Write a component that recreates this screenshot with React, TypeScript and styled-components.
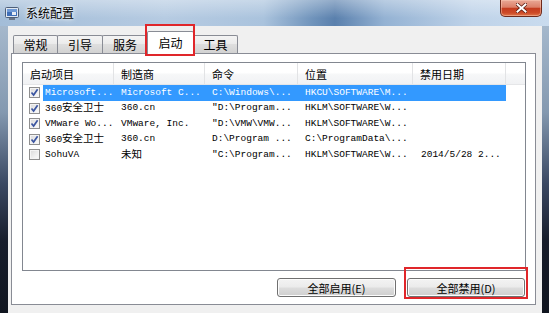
import styled, { createGlobalStyle } from "styled-components";

const Global = createGlobalStyle`
  html, body { margin: 0; padding: 0; }
  body { width: 549px; height: 313px; overflow: hidden; background: #161c29; }
`;

const Window = styled.div`
  width: 549px;
  height: 313px;
  display: flex;
  flex-direction: column;
  overflow: hidden;
`;

const TitleBar = styled.div`
  height: 26px;
  flex: none;
  display: flex;
  align-items: flex-start;
  padding-left: 5px;
  background:
    linear-gradient(180deg, rgba(255, 255, 255, 0.35), rgba(255, 255, 255, 0) 70%),
    linear-gradient(90deg, #a3bdd8 0%, #b6cbe2 30%, #aac3dd 48%, #6f93bb 57%, #5a80ad 61%, #94b2d3 70%, #bfd3e9 86%, #c9dbee 100%);
`;

const TitleIcon = styled.svg`
  margin-top: 7px;
  flex: none;
`;

const TitleText = styled.span`
  margin: 6px 0 0 7px;
  font: 12px/14px "Noto Sans CJK SC", sans-serif;
  color: #000;
  text-shadow: 0 0 6px #fff, 0 0 3px #fff;
`;

const CloseButton = styled.div`
  margin-left: auto;
  margin-right: 7px;
  width: 42px;
  height: 17px;
  box-sizing: border-box;
  display: flex;
  align-items: center;
  justify-content: center;
  border: 1px solid #6e2a1c;
  border-top: none;
  border-radius: 0 0 5px 5px;
  background: linear-gradient(180deg, #e9a896 0%, #dc8069 45%, #c43c1f 52%, #cd4a27 80%, #e0764a 100%);
  box-shadow: inset 0 0 0 1px rgba(255, 210, 190, 0.45);
`;

const Body = styled.div`
  flex: 1;
  display: flex;
  padding: 0 7px 0 8px;
  background: linear-gradient(180deg, #a5b8cc 0%, #8499b0 30%, #3a4862 55%, #171d2b 75%, #10151f 100%);
`;

const Client = styled.div`
  flex: 1;
  display: flex;
  flex-direction: column;
  padding: 0 6px 8px 3px;
  background: #f0f0f0;
`;

const TabStrip = styled.div`
  height: 27px;
  flex: none;
  display: flex;
  align-items: flex-end;
  padding-left: 2px;
  position: relative;
  z-index: 1;
`;

const Tab = styled.div<{ $w: number; $active?: boolean }>`
  position: relative;
  width: ${(p) => p.$w}px;
  height: ${(p) => (p.$active ? 23 : 18)}px;
  margin-right: -1px;
  margin-bottom: ${(p) => (p.$active ? -1 : 0)}px;
  box-sizing: border-box;
  display: flex;
  align-items: center;
  justify-content: center;
  border: 1px solid #898c95;
  border-bottom: none;
  border-radius: 2px 2px 0 0;
  background: ${(p) =>
    p.$active ? "#fff" : "linear-gradient(180deg, #f4f4f4 0%, #ebebeb 45%, #dedede 50%, #d2d2d2 100%)"};
  z-index: ${(p) => (p.$active ? 2 : 0)};
  font: 12px/14px "Noto Sans CJK SC", sans-serif;
  color: #000;

  ${(p) =>
    p.$active &&
    `
    &::after {
      content: "";
      position: absolute;
      left: -3px;
      right: -2px;
      top: -8px;
      bottom: -2px;
      border: 2px solid #e0262a;
    }
  `}
`;

const Panel = styled.div`
  flex: 1;
  display: flex;
  flex-direction: column;
  padding: 8px 9px 7px 10px;
  border: 1px solid #898c95;
  background: #fff;
`;

const ListView = styled.div`
  height: 209px;
  flex: none;
  box-sizing: border-box;
  border: 1px solid #828790;
  background: #fff;
  overflow: hidden;
`;

const HeaderRow = styled.div`
  display: grid;
  grid-template-columns: 91px 91px 93px 115px 93px 1fr;
  height: 22px;
  background: linear-gradient(180deg, #ffffff 0%, #ffffff 45%, #f6f7f8 55%, #f1f2f4 100%);
  border-bottom: 1px solid #e5e6e8;
  box-sizing: border-box;
`;

const HeaderCell = styled.div`
  display: flex;
  align-items: center;
  padding-left: 7px;
  border-right: 1px solid #e2e3e5;
  font: 11px/14px "Noto Sans CJK SC", sans-serif;
  color: #000;

  &:last-child {
    border-right: none;
  }
`;

const Row = styled.div`
  display: flex;
  height: 15.5px;
`;

const CheckCell = styled.div`
  width: 20px;
  flex: none;
  display: flex;
  align-items: center;
  padding-left: 6px;
  box-sizing: border-box;
`;

const Check = styled.div<{ $on: boolean }>`
  width: 11px;
  height: 11px;
  box-sizing: border-box;
  border: 1px solid #8f8f8f;
  background: linear-gradient(135deg, #d9d9d9 0%, #ececec 50%, #fdfdfd 100%);
  box-shadow: inset 0 0 0 1px #f4f4f4;
  display: flex;
  align-items: center;
  justify-content: center;
`;

const RowBody = styled.div<{ $sel?: boolean }>`
  display: grid;
  grid-template-columns: 71px 91px 93px 115px 93px;
  align-items: center;
  background: ${(p) => (p.$sel ? "#3399ff" : "transparent")};
  color: ${(p) => (p.$sel ? "#fff" : "#000")};
`;

const Cell = styled.div<{ $pad: number }>`
  padding-left: ${(p) => p.$pad}px;
  white-space: nowrap;
  overflow: hidden;
  font: 9.5px/14px "Liberation Mono", monospace;
`;

const Han = styled.span`
  font: 10.5px/14px "Noto Sans CJK SC", sans-serif;
`;

const ButtonRow = styled.div`
  display: flex;
  justify-content: flex-end;
  gap: 11px;
  margin-top: 7px;
  padding-right: 1px;
`;

const Button = styled.div<{ $w: number; $marked?: boolean }>`
  position: relative;
  width: ${(p) => p.$w}px;
  height: 19px;
  box-sizing: border-box;
  display: flex;
  align-items: center;
  justify-content: center;
  border: 1px solid #707070;
  border-radius: 3px;
  background: linear-gradient(180deg, #f3f3f3 0%, #ebebeb 48%, #dddddd 52%, #cfcfcf 100%);
  box-shadow: inset 0 0 0 1px #fcfcfc;
  font: 11px/14px "Noto Sans CJK SC", sans-serif;
  color: #000;

  ${(p) =>
    p.$marked &&
    `
    &::after {
      content: "";
      position: absolute;
      left: -4px;
      right: -4px;
      top: -12px;
      bottom: -3px;
      border: 2px solid #e0262a;
    }
  `}
`;

const han = /([\u3400-\u9fff]+)/;

function mixed(text: string) {
  return text
    .split(han)
    .map((part, i) => (han.test(part) ? <Han key={i}>{part}</Han> : part ? <span key={i}>{part}</span> : null));
}

const tabs = [
  { label: "常规", w: 45 },
  { label: "引导", w: 46 },
  { label: "服务", w: 46 },
  { label: "启动", w: 47, active: true },
  { label: "工具", w: 45 },
];

const columns = ["启动项目", "制造商", "命令", "位置", "禁用日期", ""];

const rows = [
  { on: true, sel: true, cells: ["Microsoft...", "Microsoft C...", "C:\\Windows\\...", "HKCU\\SOFTWARE\\M...", ""] },
  { on: true, cells: ["360安全卫士", "360.cn", "\"D:\\Program...", "HKLM\\SOFTWARE\\W...", ""] },
  { on: true, cells: ["VMware Wo...", "VMware, Inc.", "\"D:\\VMW\\VMW...", "HKLM\\SOFTWARE\\W...", ""] },
  { on: true, cells: ["360安全卫士", "360.cn", "D:\\Program ...", "C:\\ProgramData\\...", ""] },
  { on: false, cells: ["SohuVA", "未知", "\"C:\\Program...", "HKLM\\SOFTWARE\\W...", "2014/5/28 2..."] },
];

const pads = [2, 7, 7, 7, 8];

export default function App() {
  return (
    <Window>
      <Global />
      <TitleBar>
        <TitleIcon width="14" height="13" viewBox="0 0 14 13">
          <rect x="0.5" y="0.5" width="13" height="10" rx="1" fill="#dfe7f1" stroke="#4d5f78" />
          <rect x="2" y="2" width="10" height="7" fill="#3f6fb8" />
          <rect x="2" y="2" width="10" height="3" fill="#6f9ad6" />
          <rect x="4" y="11" width="6" height="2" fill="#6a7688" />
          <rect x="7" y="5" width="4" height="3" fill="#e8eef6" />
        </TitleIcon>
        <TitleText>系统配置</TitleText>
        <CloseButton>
          <svg width="11" height="10" viewBox="0 0 11 10">
            <path d="M1.5 1.5 L9.5 8.5 M9.5 1.5 L1.5 8.5" stroke="#5a1c10" strokeWidth="3.6" strokeLinecap="square" />
            <path d="M1.5 1.5 L9.5 8.5 M9.5 1.5 L1.5 8.5" stroke="#fff" strokeWidth="2" strokeLinecap="square" />
          </svg>
        </CloseButton>
      </TitleBar>
      <Body>
        <Client>
          <TabStrip>
            {tabs.map((t) => (
              <Tab key={t.label} $w={t.w} $active={t.active}>
                {t.label}
              </Tab>
            ))}
          </TabStrip>
          <Panel>
            <ListView>
              <HeaderRow>
                {columns.map((c, i) => (
                  <HeaderCell key={i}>{c}</HeaderCell>
                ))}
              </HeaderRow>
              {rows.map((r, i) => (
                <Row key={i}>
                  <CheckCell>
                    <Check $on={r.on}>
                      {r.on && (
                        <svg width="9" height="9" viewBox="0 0 9 9">
                          <path d="M1.5 4.5 L3.6 7 L7.6 1.3" fill="none" stroke="#3b55a0" strokeWidth="1.7" />
                        </svg>
                      )}
                    </Check>
                  </CheckCell>
                  <RowBody $sel={r.sel}>
                    {r.cells.map((c, j) => (
                      <Cell key={j} $pad={pads[j]}>
                        {mixed(c)}
                      </Cell>
                    ))}
                  </RowBody>
                </Row>
              ))}
            </ListView>
            <ButtonRow>
              <Button $w={119}>全部启用(E)</Button>
              <Button $w={118} $marked>
                全部禁用(D)
              </Button>
            </ButtonRow>
          </Panel>
        </Client>
      </Body>
    </Window>
  );
}
